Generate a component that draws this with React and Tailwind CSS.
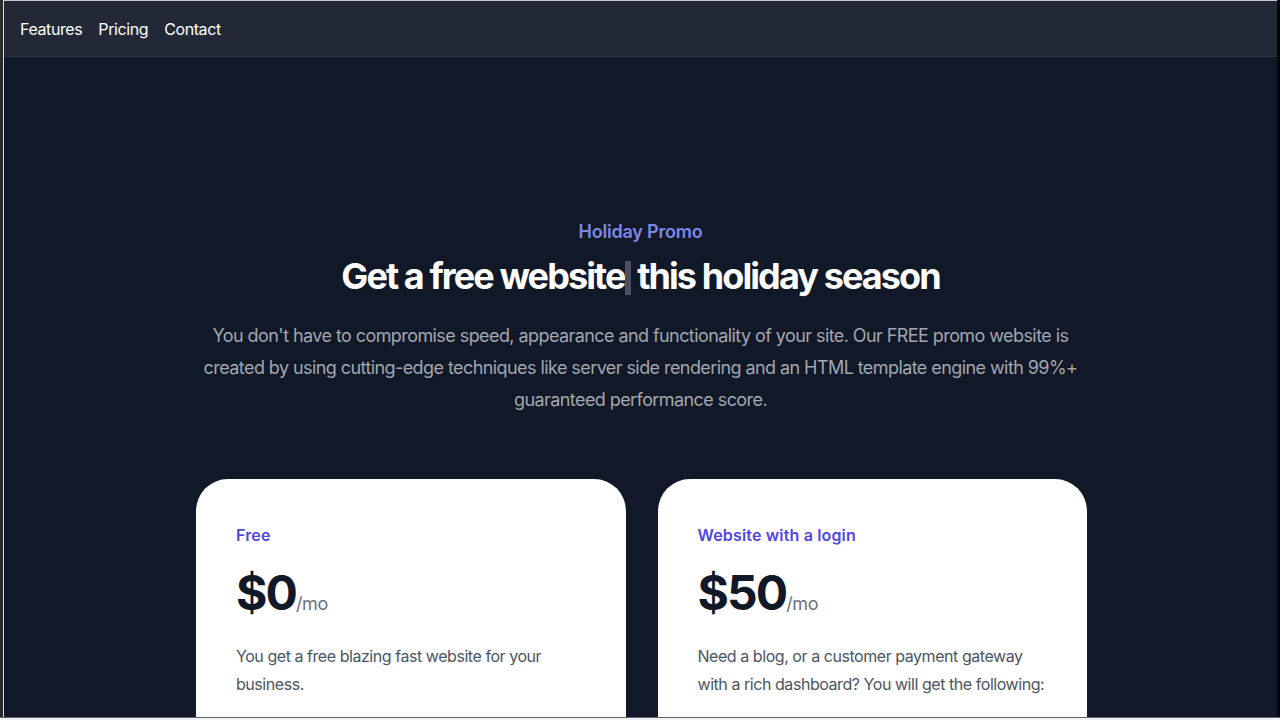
import React from "react";

export default function App() {
  return (
    <div className="h-[720px] w-[1280px] overflow-hidden bg-[#f2f2f4] font-['Inter',sans-serif]">
      <div className="flex h-[717px]">
        <div className="w-[3px] bg-[#2b2b2b]" />
        <div className="w-px bg-[#d9d9d9]" />
        <div className="flex flex-1 flex-col overflow-hidden">
          <div className="h-px bg-[#c9c9cc]" />
          <div className="flex-1 overflow-hidden bg-[#111827]">
            <nav className="flex h-[56px] items-center gap-4 border-b border-[#2b3340] bg-[#222836] px-4 pt-px text-base tracking-[-0.025em] text-white">
              <a>Features</a>
              <a>Pricing</a>
              <a>Contact</a>
            </nav>
            <main className="px-6 pt-[161px]">
              <div className="mx-auto max-w-4xl text-center">
                <p className="text-lg font-semibold leading-7 tracking-[-0.012em] text-[#7f87e6]">Holiday Promo</p>
                <h1 className="mt-[9px] text-4xl font-bold tracking-[-0.053em] text-white">
                  Get a free website<span className="inline-block h-[34px] w-[6px] translate-y-[6px] bg-[#4b5060] align-baseline"></span> this holiday season
                </h1>
                <p className="mt-6 text-lg leading-8 tracking-[-0.032em] text-[#a1a6b0]">
                  You don't have to compromise speed, appearance and functionality of your site. Our FREE promo website is created by using cutting-edge techniques like server side rendering and an HTML template engine with 99%+ guaranteed performance score.
                </p>
              </div>
              <div className="mx-auto mt-[63px] grid w-[891px] translate-x-[1px] grid-cols-2 gap-8">
                <div className="min-h-[420px] rounded-[32px] bg-white px-10 pb-10 pt-[42px]">
                  <h3 className="text-base font-semibold leading-7 tracking-[0.01em] text-[#4f46e5]">Free</h3>
                  <p className="mt-5 flex items-baseline">
                    <span className="text-5xl font-bold tracking-[-0.04em] text-[#111827]">$0</span>
                    <span className="text-lg tracking-[-0.02em] text-[#6b7280]">/mo</span>
                  </p>
                  <p className="mt-6 text-base leading-7 tracking-[-0.028em] text-[#4b5563]">
                    You get a free blazing fast website for your business.
                  </p>
                </div>
                <div className="min-h-[420px] rounded-[32px] bg-white px-10 pb-10 pt-[42px]">
                  <h3 className="text-base font-semibold leading-7 tracking-[0.01em] text-[#4f46e5]">Website with a login</h3>
                  <p className="mt-5 flex items-baseline">
                    <span className="text-5xl font-bold tracking-[-0.04em] text-[#111827]">$50</span>
                    <span className="text-lg tracking-[-0.02em] text-[#6b7280]">/mo</span>
                  </p>
                  <p className="mt-6 text-base leading-7 tracking-[-0.028em] text-[#4b5563]">
                    Need a blog, or a customer payment gateway with a rich dashboard? You will get the following:
                  </p>
                </div>
              </div>
            </main>
          </div>
        </div>
        <div className="w-[3px] bg-[#050505]" />
      </div>
      <div className="h-px bg-[#5f6275]" />
    </div>
  );
}
